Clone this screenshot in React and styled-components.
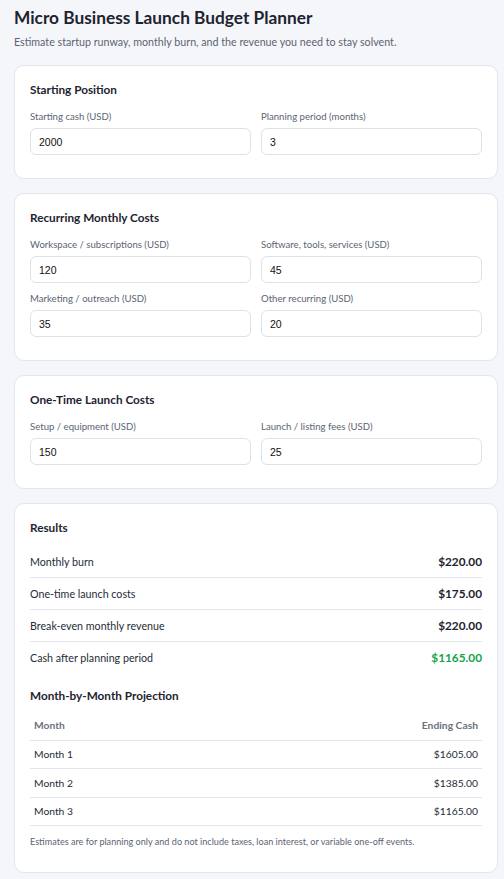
import React from "react";
import styled, { createGlobalStyle } from "styled-components";

const GlobalStyle = createGlobalStyle`
  * { box-sizing: border-box; }
  body {
    margin: 0;
    background: #f5f6fa;
    font-family: Lato, "Noto Sans", sans-serif;
    color: #1f2937;
  }
`;

const Page = styled.div`
  padding: 4px 6px 14px 14px;
`;

const Title = styled.h1`
  font-size: 17.3px;
  font-weight: 700;
  color: #1e2330;
  margin: 0 0 2px;
  line-height: 28px;
`;

const Subtitle = styled.p`
  font-size: 10.7px;
  color: #5b6473;
  margin: 0 0 15px;
  line-height: 16px;
`;

const Card = styled.section`
  background: #fff;
  border: 1px solid #e2e6ee;
  border-radius: 10px;
  padding: 15px 15px 23px;
  margin-bottom: 14px;
`;

const Heading = styled.h2`
  font-size: 11.75px;
  font-weight: 700;
  color: #1e2330;
  margin: ${(p) => p.$top || 0}px 0 ${(p) => p.$gap ?? 11}px;
  line-height: 17px;
`;

const Grid = styled.div`
  display: grid;
  grid-template-columns: 1fr 1fr;
  column-gap: 10px;
  row-gap: 8px;
`;

const Field = styled.label`
  display: flex;
  flex-direction: column;
  gap: 4px;
`;

const Label = styled.span`
  font-size: 9.6px;
  color: #5b6473;
  line-height: 15px;
`;

const Input = styled.input`
  height: 27px;
  border: 1px solid #dde2ea;
  border-radius: 6px;
  padding: 0 8px;
  font-family: "Liberation Sans", Arial, sans-serif;
  font-size: 10.5px;
  color: #111;
  background: #fff;
  outline: none;
`;

const Row = styled.div`
  display: flex;
  justify-content: space-between;
  align-items: center;
  height: 32px;
  border-bottom: 1px solid ${(p) => (p.$last ? "transparent" : "#e2e6ee")};
`;

const RowLabel = styled.span`
  font-size: 10.7px;
  color: #262b36;
`;

const RowValue = styled.span`
  font-size: 11.8px;
  font-weight: 700;
  color: ${(p) => (p.$good ? "#16a34a" : "#1e2330")};
`;

const Table = styled.table`
  width: 100%;
  border-collapse: collapse;
  margin-top: 6px;
`;

const Th = styled.th`
  font-size: 10.3px;
  font-weight: 700;
  color: #6b7280;
  text-align: ${(p) => p.$align || "left"};
  padding: 6px 4px;
  height: 30px;
  border-bottom: 1px solid #e2e6ee;
`;

const Td = styled.td`
  font-size: 10.3px;
  color: #262b36;
  text-align: ${(p) => p.$align || "left"};
  padding: 6px 4px;
  height: 28.5px;
  border-bottom: 1px solid #e2e6ee;
`;

const Note = styled.p`
  font-size: 9.1px;
  color: #5b6473;
  margin: 9px 0 0;
  line-height: 14px;
`;

const InputField = ({ label, value }) => (
  <Field>
    <Label>{label}</Label>
    <Input defaultValue={value} />
  </Field>
);

const results = [
  ["Monthly burn", "$220.00"],
  ["One-time launch costs", "$175.00"],
  ["Break-even monthly revenue", "$220.00"],
  ["Cash after planning period", "$1165.00", true],
];

const months = [
  ["Month 1", "$1605.00"],
  ["Month 2", "$1385.00"],
  ["Month 3", "$1165.00"],
];

export default function App() {
  return (
    <Page>
      <GlobalStyle />
      <Title>Micro Business Launch Budget Planner</Title>
      <Subtitle>
        Estimate startup runway, monthly burn, and the revenue you need to stay solvent.
      </Subtitle>

      <Card>
        <Heading>Starting Position</Heading>
        <Grid>
          <InputField label="Starting cash (USD)" value="2000" />
          <InputField label="Planning period (months)" value="3" />
        </Grid>
      </Card>

      <Card>
        <Heading>Recurring Monthly Costs</Heading>
        <Grid>
          <InputField label="Workspace / subscriptions (USD)" value="120" />
          <InputField label="Software, tools, services (USD)" value="45" />
          <InputField label="Marketing / outreach (USD)" value="35" />
          <InputField label="Other recurring (USD)" value="20" />
        </Grid>
      </Card>

      <Card>
        <Heading>One-Time Launch Costs</Heading>
        <Grid>
          <InputField label="Setup / equipment (USD)" value="150" />
          <InputField label="Launch / listing fees (USD)" value="25" />
        </Grid>
      </Card>

      <Card>
        <Heading $gap={10}>Results</Heading>
        {results.map(([label, value, good], i) => (
          <Row key={label} $last={i === results.length - 1}>
            <RowLabel>{label}</RowLabel>
            <RowValue $good={good}>{value}</RowValue>
          </Row>
        ))}
        <Heading $top={13} $gap={0}>Month-by-Month Projection</Heading>
        <Table>
          <thead>
            <tr>
              <Th>Month</Th>
              <Th $align="right">Ending Cash</Th>
            </tr>
          </thead>
          <tbody>
            {months.map(([m, v]) => (
              <tr key={m}>
                <Td>{m}</Td>
                <Td $align="right">{v}</Td>
              </tr>
            ))}
          </tbody>
        </Table>
        <Note>
          Estimates are for planning only and do not include taxes, loan interest, or variable one-off events.
        </Note>
      </Card>
    </Page>
  );
}
